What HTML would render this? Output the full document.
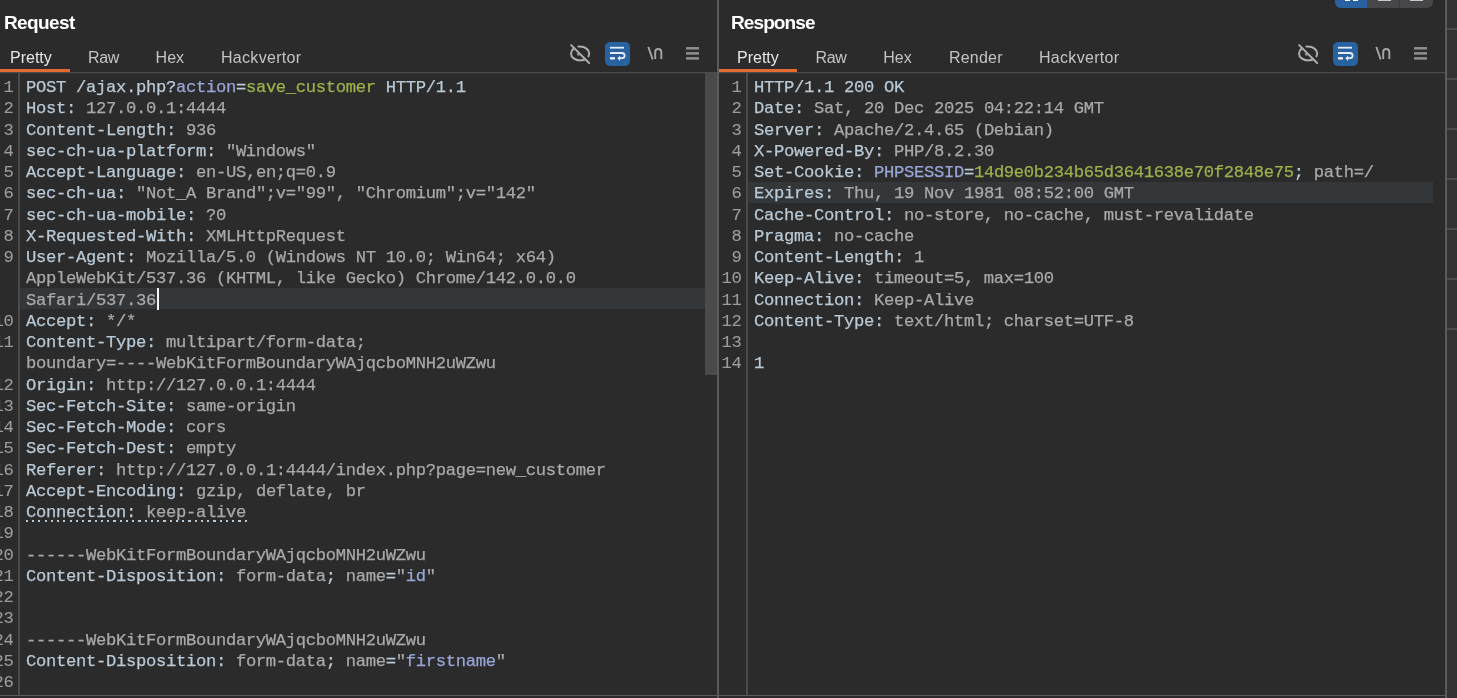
<!DOCTYPE html>
<html><head><meta charset="utf-8"><style>
*{margin:0;padding:0;box-sizing:border-box}
html,body{width:1457px;height:698px;overflow:hidden;background:#2b2b2b}
body{position:relative;font-family:"Liberation Sans",sans-serif}
.a{position:absolute}
#w{position:absolute;left:0;top:0;width:1457px;height:698px;will-change:transform}
.title{position:absolute;font-weight:bold;font-size:19px;color:#ffffff;letter-spacing:-0.6px;line-height:20px}
.tab{position:absolute;font-size:16px;letter-spacing:0px;color:#c4c4c4;line-height:18px}
.tab.sel{color:#e6e6e6}
.row,.ln{position:absolute;font-family:"Liberation Mono",monospace;font-size:17.2px;letter-spacing:-0.320px;line-height:21.25px;white-space:pre;-webkit-text-stroke:0.25px currentColor}
.ln{width:60px;text-align:right;color:#9c9c9c;-webkit-text-stroke:0.1px currentColor}
.hl{position:absolute;height:21.25px;background:#33373a}
.h{color:#b9c9d6} .v{color:#a9a9a9} .l{color:#98a6d6} .g{color:#9bb24c}
.u{text-decoration:underline dotted;text-underline-offset:3px}
.caret{display:inline-block;width:2px;height:19px;background:#fff;vertical-align:-4px;margin-left:-1px}
</style></head>
<body><div id="w">
<div class="a" style="left:0;top:72px;width:1446px;height:1px;background:#4b4b4b"></div>
<div class="a" style="left:0;top:73px;width:1446px;height:1px;background:#353535"></div>
<div class="a" style="left:0;top:695px;width:1446px;height:1px;background:#5b5b5b"></div>
<div class="a" style="left:1447px;top:0;width:10px;height:698px;background:#313335"></div>
<div class="a" style="left:1447px;top:28px;width:10px;height:2px;background:#4b4b4b"></div>
<div class="a" style="left:1447px;top:78px;width:10px;height:2px;background:#4b4b4b"></div>
<div class="a" style="left:1447px;top:128px;width:10px;height:2px;background:#4b4b4b"></div>
<div class="a" style="left:1447px;top:178px;width:10px;height:2px;background:#4b4b4b"></div>
<div class="a" style="left:1447px;top:228px;width:10px;height:2px;background:#4b4b4b"></div>
<div class="a" style="left:1447px;top:278px;width:10px;height:2px;background:#4b4b4b"></div>
<div class="a" style="left:1447px;top:328px;width:10px;height:2px;background:#4b4b4b"></div>
<div class="a" style="left:1445px;top:0;width:2px;height:698px;background:#5b5b5b"></div>
<div class="a" style="left:717px;top:0;width:2px;height:698px;background:#5b5b5b"></div>
<div class="a" style="left:18px;top:73px;width:2px;height:622px;background:#4b4b4b"></div>
<div class="a" style="left:746px;top:73px;width:2px;height:622px;background:#4b4b4b"></div>
<div class="a" style="left:705px;top:73px;width:12px;height:302px;background:#4a4a4a"></div>
<div class="title" style="left:4px;top:13px;letter-spacing:-0.6px">Request</div>
<div class="title" style="left:731px;top:13px;letter-spacing:-0.9px">Response</div>
<div class="tab sel" style="left:10px;top:48.5px">Pretty</div>
<div class="tab" style="left:88px;top:48.5px;letter-spacing:-0.4px">Raw</div>
<div class="tab" style="left:155.6px;top:48.5px">Hex</div>
<div class="tab" style="left:221px;top:48.5px;letter-spacing:0.3px">Hackvertor</div>
<div class="tab sel" style="left:737px;top:48.5px">Pretty</div>
<div class="tab" style="left:815.5px;top:48.5px;letter-spacing:-0.4px">Raw</div>
<div class="tab" style="left:883.2px;top:48.5px">Hex</div>
<div class="tab" style="left:949px;top:48.5px;letter-spacing:0.2px">Render</div>
<div class="tab" style="left:1039px;top:48.5px;letter-spacing:0.3px">Hackvertor</div>
<div class="a" style="left:0;top:69px;width:70px;height:3px;background:#e46a32"></div>
<div class="a" style="left:719px;top:69px;width:78px;height:3px;background:#e46a32"></div>
<div class="ln" style="left:-46.5px;top:77.00px">1</div>
<div class="row" style="left:26px;top:77.00px"><span class="h">POST /ajax.php?</span><span class="l">action</span><span class="h">=</span><span class="g">save_customer</span><span class="h"> HTTP/1.1</span></div>
<div class="ln" style="left:-46.5px;top:98.25px">2</div>
<div class="row" style="left:26px;top:98.25px"><span class="h">Host:</span><span class="v"> 127.0.0.1:4444</span></div>
<div class="ln" style="left:-46.5px;top:119.50px">3</div>
<div class="row" style="left:26px;top:119.50px"><span class="h">Content-Length:</span><span class="v"> 936</span></div>
<div class="ln" style="left:-46.5px;top:140.75px">4</div>
<div class="row" style="left:26px;top:140.75px"><span class="h">sec-ch-ua-platform:</span><span class="v"> &quot;Windows&quot;</span></div>
<div class="ln" style="left:-46.5px;top:162.00px">5</div>
<div class="row" style="left:26px;top:162.00px"><span class="h">Accept-Language:</span><span class="v"> en-US,en;q=0.9</span></div>
<div class="ln" style="left:-46.5px;top:183.25px">6</div>
<div class="row" style="left:26px;top:183.25px"><span class="h">sec-ch-ua:</span><span class="v"> &quot;Not_A Brand&quot;;v=&quot;99&quot;, &quot;Chromium&quot;;v=&quot;142&quot;</span></div>
<div class="ln" style="left:-46.5px;top:204.50px">7</div>
<div class="row" style="left:26px;top:204.50px"><span class="h">sec-ch-ua-mobile:</span><span class="v"> ?0</span></div>
<div class="ln" style="left:-46.5px;top:225.75px">8</div>
<div class="row" style="left:26px;top:225.75px"><span class="h">X-Requested-With:</span><span class="v"> XMLHttpRequest</span></div>
<div class="ln" style="left:-46.5px;top:247.00px">9</div>
<div class="row" style="left:26px;top:247.00px"><span class="h">User-Agent:</span><span class="v"> Mozilla/5.0 (Windows NT 10.0; Win64; x64)</span></div>
<div class="row" style="left:26px;top:268.25px"><span class="v">AppleWebKit/537.36 (KHTML, like Gecko) Chrome/142.0.0.0</span></div>
<div class="hl" style="left:20px;width:685px;top:288.10px"></div>
<div class="row" style="left:26px;top:289.50px"><span class="v">Safari/537.36</span></div>
<div class="ln" style="left:-46.5px;top:310.75px">10</div>
<div class="row" style="left:26px;top:310.75px"><span class="h">Accept:</span><span class="v"> */*</span></div>
<div class="ln" style="left:-46.5px;top:332.00px">11</div>
<div class="row" style="left:26px;top:332.00px"><span class="h">Content-Type:</span><span class="v"> multipart/form-data;</span></div>
<div class="row" style="left:26px;top:353.25px"><span class="v">boundary=----WebKitFormBoundaryWAjqcboMNH2uWZwu</span></div>
<div class="ln" style="left:-46.5px;top:374.50px">12</div>
<div class="row" style="left:26px;top:374.50px"><span class="h">Origin:</span><span class="v"> http://127.0.0.1:4444</span></div>
<div class="ln" style="left:-46.5px;top:395.75px">13</div>
<div class="row" style="left:26px;top:395.75px"><span class="h">Sec-Fetch-Site:</span><span class="v"> same-origin</span></div>
<div class="ln" style="left:-46.5px;top:417.00px">14</div>
<div class="row" style="left:26px;top:417.00px"><span class="h">Sec-Fetch-Mode:</span><span class="v"> cors</span></div>
<div class="ln" style="left:-46.5px;top:438.25px">15</div>
<div class="row" style="left:26px;top:438.25px"><span class="h">Sec-Fetch-Dest:</span><span class="v"> empty</span></div>
<div class="ln" style="left:-46.5px;top:459.50px">16</div>
<div class="row" style="left:26px;top:459.50px"><span class="h">Referer:</span><span class="v"> http://127.0.0.1:4444/index.php?page=new_customer</span></div>
<div class="ln" style="left:-46.5px;top:480.75px">17</div>
<div class="row" style="left:26px;top:480.75px"><span class="h">Accept-Encoding:</span><span class="v"> gzip, deflate, br</span></div>
<div class="ln" style="left:-46.5px;top:502.00px">18</div>
<div class="row" style="left:26px;top:502.00px"><span class="h">Connection:</span><span class="v"> keep-alive</span></div>
<div class="ln" style="left:-46.5px;top:523.25px">19</div>
<div class="ln" style="left:-46.5px;top:544.50px">20</div>
<div class="row" style="left:26px;top:544.50px"><span class="v">------WebKitFormBoundaryWAjqcboMNH2uWZwu</span></div>
<div class="ln" style="left:-46.5px;top:565.75px">21</div>
<div class="row" style="left:26px;top:565.75px"><span class="h">Content-Disposition:</span><span class="v"> form-data</span><span class="h">;</span><span class="v"> name</span><span class="h">=</span><span class="v">&quot;</span><span class="l">id</span><span class="v">&quot;</span></div>
<div class="ln" style="left:-46.5px;top:587.00px">22</div>
<div class="ln" style="left:-46.5px;top:608.25px">23</div>
<div class="ln" style="left:-46.5px;top:629.50px">24</div>
<div class="row" style="left:26px;top:629.50px"><span class="v">------WebKitFormBoundaryWAjqcboMNH2uWZwu</span></div>
<div class="ln" style="left:-46.5px;top:650.75px">25</div>
<div class="row" style="left:26px;top:650.75px"><span class="h">Content-Disposition:</span><span class="v"> form-data</span><span class="h">;</span><span class="v"> name</span><span class="h">=</span><span class="v">&quot;</span><span class="l">firstname</span><span class="v">&quot;</span></div>
<div class="ln" style="left:-46.5px;top:672.00px">26</div>
<div class="ln" style="left:681.5px;top:77.00px">1</div>
<div class="row" style="left:754px;top:77.00px"><span class="h">HTTP/1.1 200 OK</span></div>
<div class="ln" style="left:681.5px;top:98.25px">2</div>
<div class="row" style="left:754px;top:98.25px"><span class="h">Date:</span><span class="v"> Sat, 20 Dec 2025 04:22:14 GMT</span></div>
<div class="ln" style="left:681.5px;top:119.50px">3</div>
<div class="row" style="left:754px;top:119.50px"><span class="h">Server:</span><span class="v"> Apache/2.4.65 (Debian)</span></div>
<div class="ln" style="left:681.5px;top:140.75px">4</div>
<div class="row" style="left:754px;top:140.75px"><span class="h">X-Powered-By:</span><span class="v"> PHP/8.2.30</span></div>
<div class="ln" style="left:681.5px;top:162.00px">5</div>
<div class="row" style="left:754px;top:162.00px"><span class="h">Set-Cookie:</span><span class="v"> </span><span class="l">PHPSESSID</span><span class="h">=</span><span class="g">14d9e0b234b65d3641638e70f2848e75</span><span class="h">;</span><span class="v"> path=/</span></div>
<div class="hl" style="left:748px;width:685px;top:181.85px"></div>
<div class="ln" style="left:681.5px;top:183.25px">6</div>
<div class="row" style="left:754px;top:183.25px"><span class="h">Expires:</span><span class="v"> Thu, 19 Nov 1981 08:52:00 GMT</span></div>
<div class="ln" style="left:681.5px;top:204.50px">7</div>
<div class="row" style="left:754px;top:204.50px"><span class="h">Cache-Control:</span><span class="v"> no-store, no-cache, must-revalidate</span></div>
<div class="ln" style="left:681.5px;top:225.75px">8</div>
<div class="row" style="left:754px;top:225.75px"><span class="h">Pragma:</span><span class="v"> no-cache</span></div>
<div class="ln" style="left:681.5px;top:247.00px">9</div>
<div class="row" style="left:754px;top:247.00px"><span class="h">Content-Length:</span><span class="v"> 1</span></div>
<div class="ln" style="left:681.5px;top:268.25px">10</div>
<div class="row" style="left:754px;top:268.25px"><span class="h">Keep-Alive:</span><span class="v"> timeout=5, max=100</span></div>
<div class="ln" style="left:681.5px;top:289.50px">11</div>
<div class="row" style="left:754px;top:289.50px"><span class="h">Connection:</span><span class="v"> Keep-Alive</span></div>
<div class="ln" style="left:681.5px;top:310.75px">12</div>
<div class="row" style="left:754px;top:310.75px"><span class="h">Content-Type:</span><span class="v"> text/html; charset=UTF-8</span></div>
<div class="ln" style="left:681.5px;top:332.00px">13</div>
<div class="ln" style="left:681.5px;top:353.25px">14</div>
<div class="row" style="left:754px;top:353.25px"><span class="h">1</span></div>
<div class="a" style="left:26px;top:520px;width:222px;height:2px;background:repeating-linear-gradient(90deg,#b9c9d6 0 2px,transparent 2px 6.25px)"></div>
<div class="a" style="left:157px;top:288px;width:2px;height:22px;background:#f4f4f4"></div>
<svg class="a" style="left:566px;top:41px" width="28" height="26" viewBox="0 0 28 26"><g fill="none" stroke-linecap="round"><ellipse cx="14.1" cy="12.5" rx="9.1" ry="6.9" stroke="#acacac" stroke-width="2"/><path d="M6.6 2.6 L24.7 20.5" stroke="#2b2b2b" stroke-width="2.6"/><path d="M5.2 4.1 L23.1 22" stroke="#acacac" stroke-width="2"/></g><circle cx="12.6" cy="13" r="1.7" fill="#9a9a9a"/></svg>
<svg class="a" style="left:605px;top:42px" width="25" height="24" viewBox="0 0 25 24"><rect x="0" y="0" width="25" height="24" rx="5" fill="#2962a0"/><g fill="none" stroke="#e6ecf4" stroke-width="1.8"><path d="M5 5.7 H19"/><path d="M5 11 H17 A2.6 2.6 0 0 1 17 16.2 H14.5"/><path d="M5 16.3 H10" stroke-width="2.4"/></g><path d="M12.3 16.2 L15.2 13.5 L15.2 18.9Z" fill="#e6ecf4"/></svg>
<svg class="a" style="left:644px;top:44px" width="20" height="18" viewBox="0 0 20 18"><g fill="none" stroke="#a6a6a6" stroke-width="1.9"><path d="M4.3 2.9 L8.7 15.5"/><path d="M11.2 15 V8 A3.05 3.05 0 0 1 17.3 8 V15"/></g></svg>
<svg class="a" style="left:686px;top:46px" width="14" height="14" viewBox="0 0 14 14"><g fill="#8f8f8f"><rect x="0" y="1.05" width="13" height="2.5"/><rect x="0" y="6.15" width="13" height="2.5"/><rect x="0" y="11.15" width="13" height="2.5"/></g></svg>
<svg class="a" style="left:1294px;top:41px" width="28" height="26" viewBox="0 0 28 26"><g fill="none" stroke-linecap="round"><ellipse cx="14.1" cy="12.5" rx="9.1" ry="6.9" stroke="#acacac" stroke-width="2"/><path d="M6.6 2.6 L24.7 20.5" stroke="#2b2b2b" stroke-width="2.6"/><path d="M5.2 4.1 L23.1 22" stroke="#acacac" stroke-width="2"/></g><circle cx="12.6" cy="13" r="1.7" fill="#9a9a9a"/></svg>
<svg class="a" style="left:1333px;top:42px" width="25" height="24" viewBox="0 0 25 24"><rect x="0" y="0" width="25" height="24" rx="5" fill="#2962a0"/><g fill="none" stroke="#e6ecf4" stroke-width="1.8"><path d="M5 5.7 H19"/><path d="M5 11 H17 A2.6 2.6 0 0 1 17 16.2 H14.5"/><path d="M5 16.3 H10" stroke-width="2.4"/></g><path d="M12.3 16.2 L15.2 13.5 L15.2 18.9Z" fill="#e6ecf4"/></svg>
<svg class="a" style="left:1372px;top:44px" width="20" height="18" viewBox="0 0 20 18"><g fill="none" stroke="#a6a6a6" stroke-width="1.9"><path d="M4.3 2.9 L8.7 15.5"/><path d="M11.2 15 V8 A3.05 3.05 0 0 1 17.3 8 V15"/></g></svg>
<svg class="a" style="left:1414px;top:46px" width="14" height="14" viewBox="0 0 14 14"><g fill="#8f8f8f"><rect x="0" y="1.05" width="13" height="2.5"/><rect x="0" y="6.15" width="13" height="2.5"/><rect x="0" y="11.15" width="13" height="2.5"/></g></svg>
<div class="a" style="left:1335px;top:-10px;width:98px;height:18px;border-radius:6px;background:#47474a;overflow:hidden">
<div class="a" style="left:0;top:0;width:32px;height:18px;background:#2962a0"></div>
<div class="a" style="left:64px;top:0;width:1px;height:18px;background:#3a3a3c"></div>
<div class="a" style="left:10px;top:0;width:5px;height:11px;background:#fff"></div>
<div class="a" style="left:18px;top:0;width:5px;height:11px;background:#fff"></div>
<div class="a" style="left:43px;top:0;width:13px;height:11px;background:#c8c8c8"></div>
<div class="a" style="left:75px;top:0;width:13px;height:11px;background:#c8c8c8"></div>
</div>
</div></body></html>
